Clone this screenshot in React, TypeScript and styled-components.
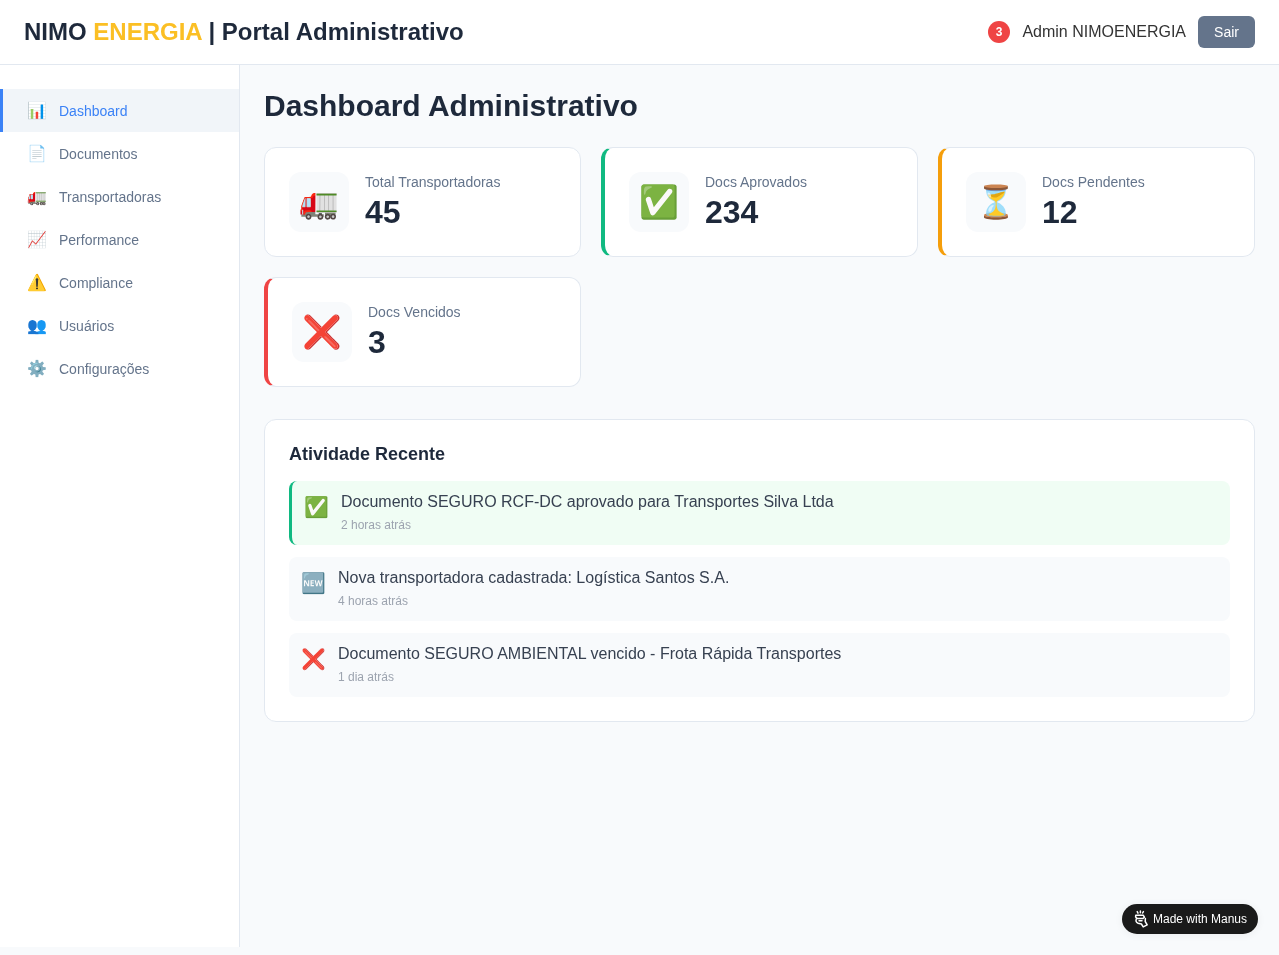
import React from 'react';
import styled, { createGlobalStyle } from 'styled-components';

const GlobalStyle = createGlobalStyle`
  * { box-sizing: border-box; }
  html, body { margin: 0; padding: 0; }
  body {
    background: #f8fafc;
    font-family: "Liberation Sans", Arial, sans-serif;
    color: #1e293b;
  }
`;

const Shell = styled.div`
  height: 947px;
  display: flex;
  flex-direction: column;
  will-change: transform;
`;

const Header = styled.header`
  height: 65px;
  flex: none;
  display: flex;
  align-items: center;
  justify-content: space-between;
  padding: 0 24px;
  background: #fff;
  border-bottom: 1px solid #e2e8f0;
`;

const Brand = styled.h1`
  margin: 0;
  font-size: 24px;
  line-height: 32px;
  font-weight: 700;
  color: #1e293b;
`;

const BrandAccent = styled.span`
  color: #fbbf24;
`;

const UserArea = styled.div`
  display: flex;
  align-items: center;
  gap: 12px;
`;

const Badge = styled.span`
  height: 22.67px;
  padding: 0 8px;
  border-radius: 50%;
  display: flex;
  align-items: center;
  justify-content: center;
  background: #ef4444;
  color: #fff;
  font-size: 12px;
  font-weight: 700;
`;

const UserName = styled.span`
  font-size: 16px;
  color: #333;
`;

const LogoutButton = styled.button`
  width: 57px;
  height: 32px;
  padding: 0;
  border: 0;
  border-radius: 6px;
  background: #64748b;
  color: #fff;
  font: 14px "Liberation Sans", Arial, sans-serif;
`;

const Body = styled.div`
  flex: 1;
  display: flex;
  min-height: 0;
`;

const Sidebar = styled.nav`
  width: 240px;
  flex: none;
  padding-top: 24px;
  background: #fff;
  border-right: 1px solid #e2e8f0;
`;

const NavItem = styled.a<{ $active?: boolean }>`
  height: 43px;
  display: flex;
  align-items: center;
  gap: 12px;
  padding: 0 24px;
  border-left: 3px solid ${p => (p.$active ? '#3b82f6' : 'transparent')};
  background: ${p => (p.$active ? '#f1f5f9' : 'transparent')};
  color: ${p => (p.$active ? '#3b82f6' : '#64748b')};
  font-size: 14px;
`;

const NavIcon = styled.span`
  width: 20px;
  font-size: 16px;
  text-align: center;
  line-height: 20px;
`;

const Main = styled.main`
  flex: 1;
  min-width: 0;
  padding: 24px;
`;

const PageTitle = styled.h2`
  margin: 0 0 24px;
  font-size: 30px;
  line-height: 34px;
  font-weight: 700;
  color: #1e293b;
`;

const StatGrid = styled.div`
  display: grid;
  grid-template-columns: repeat(3, 1fr);
  gap: 20px;
  margin-bottom: 32px;
`;

const StatCard = styled.div<{ $accent?: string }>`
  height: 110px;
  display: flex;
  align-items: center;
  gap: 16px;
  padding: 24px;
  background: #fff;
  border: 1px solid #e2e8f0;
  border-left: ${p => (p.$accent ? `4px solid ${p.$accent}` : '1px solid #e2e8f0')};
  border-radius: 12px;
`;

const StatIcon = styled.div`
  width: 60px;
  height: 60px;
  flex: none;
  display: flex;
  align-items: center;
  justify-content: center;
  border-radius: 12px;
  background: #f8fafc;
  font-size: 32px;
`;

const StatLabel = styled.div`
  font-size: 14px;
  line-height: 16px;
  color: #64748b;
  margin-bottom: 4px;
`;

const StatValue = styled.div`
  font-size: 32px;
  line-height: 37px;
  font-weight: 700;
  color: #1e293b;
`;

const ActivityCard = styled.section`
  padding: 24px;
  background: #fff;
  border: 1px solid #e2e8f0;
  border-radius: 12px;
`;

const ActivityTitle = styled.h3`
  margin: 0 0 16px;
  font-size: 18px;
  line-height: 21px;
  font-weight: 700;
  color: #1e293b;
`;

const ActivityList = styled.div`
  display: flex;
  flex-direction: column;
  gap: 12px;
`;

const ActivityItem = styled.div<{ $success?: boolean }>`
  height: 64px;
  display: flex;
  gap: 12px;
  padding: 12px;
  border-radius: 8px;
  background: ${p => (p.$success ? '#f0fdf4' : '#f8fafc')};
  border-left: ${p => (p.$success ? '3px solid #10b981' : '0')};
`;

const ActivityIcon = styled.span`
  font-size: 20px;
  line-height: 28px;
`;

const ActivityText = styled.div`
  font-size: 16px;
  line-height: 18px;
  color: #374151;
`;

const ActivityTime = styled.div`
  margin-top: 7px;
  font-size: 12px;
  line-height: 14px;
  color: #9ca3af;
`;

const ManusBadge = styled.div`
  position: fixed;
  right: 21px;
  bottom: 21px;
  width: 136px;
  height: 30px;
  display: flex;
  align-items: center;
  gap: 3px;
  padding-left: 12px;
  border-radius: 15px;
  background: #1a1a1a;
  color: #fff;
  font-size: 12px;
  box-shadow: 0 1px 8px rgba(0, 0, 0, .06);
`;

const navItems = [
  { icon: '📊', label: 'Dashboard', active: true },
  { icon: '📄', label: 'Documentos' },
  { icon: '🚛', label: 'Transportadoras' },
  { icon: '📈', label: 'Performance' },
  { icon: '⚠️', label: 'Compliance' },
  { icon: '👥', label: 'Usuários' },
  { icon: '⚙️', label: 'Configurações' },
];

const stats = [
  { icon: '🚛', label: 'Total Transportadoras', value: '45' },
  { icon: '✅', label: 'Docs Aprovados', value: '234', accent: '#10b981' },
  { icon: '⏳', label: 'Docs Pendentes', value: '12', accent: '#f59e0b' },
  { icon: '❌', label: 'Docs Vencidos', value: '3', accent: '#ef4444' },
];

const activities = [
  { icon: '✅', text: 'Documento SEGURO RCF-DC aprovado para Transportes Silva Ltda', time: '2 horas atrás', success: true },
  { icon: '🆕', text: 'Nova transportadora cadastrada: Logística Santos S.A.', time: '4 horas atrás' },
  { icon: '❌', text: 'Documento SEGURO AMBIENTAL vencido - Frota Rápida Transportes', time: '1 dia atrás' },
];

const ManusIcon = () => (
  <svg width="16" height="18" viewBox="0 0 16 18" fill="none" stroke="#fff" strokeWidth="1.5" strokeLinecap="round" strokeLinejoin="round">
    <path d="M3.2 1.6l.8 1.5M6.4 .9v1.8M9.4 1.6l-.8 1.4" />
    <path d="M1.8 5.2h7.4l1.2 2-1.6 1.4H3.2L1.6 7z" />
    <path d="M2.4 8.8c-.9 1.9-.3 3.7 1.7 4.4l3.3.8 1.8 2.9 4-2-2-3.4.2-3" />
    <path d="M5 10.8h3" />
  </svg>
);

const App = () => {
  return (
    <>
      <GlobalStyle />
      <Shell>
        <Header>
          <Brand>NIMO <BrandAccent>ENERGIA</BrandAccent> | Portal Administrativo</Brand>
          <UserArea>
            <Badge>3</Badge>
            <UserName>Admin NIMOENERGIA</UserName>
            <LogoutButton>Sair</LogoutButton>
          </UserArea>
        </Header>
        <Body>
          <Sidebar>
            {navItems.map(item => (
              <NavItem key={item.label} $active={item.active}>
                <NavIcon>{item.icon}</NavIcon>
                {item.label}
              </NavItem>
            ))}
          </Sidebar>
          <Main>
            <PageTitle>Dashboard Administrativo</PageTitle>
            <StatGrid>
              {stats.map(stat => (
                <StatCard key={stat.label} $accent={stat.accent}>
                  <StatIcon>{stat.icon}</StatIcon>
                  <div>
                    <StatLabel>{stat.label}</StatLabel>
                    <StatValue>{stat.value}</StatValue>
                  </div>
                </StatCard>
              ))}
            </StatGrid>
            <ActivityCard>
              <ActivityTitle>Atividade Recente</ActivityTitle>
              <ActivityList>
                {activities.map(activity => (
                  <ActivityItem key={activity.time} $success={activity.success}>
                    <ActivityIcon>{activity.icon}</ActivityIcon>
                    <div>
                      <ActivityText>{activity.text}</ActivityText>
                      <ActivityTime>{activity.time}</ActivityTime>
                    </div>
                  </ActivityItem>
                ))}
              </ActivityList>
            </ActivityCard>
          </Main>
        </Body>
      </Shell>
      <ManusBadge>
        <ManusIcon />
        Made with Manus
      </ManusBadge>
    </>
  );
};

export default App;
